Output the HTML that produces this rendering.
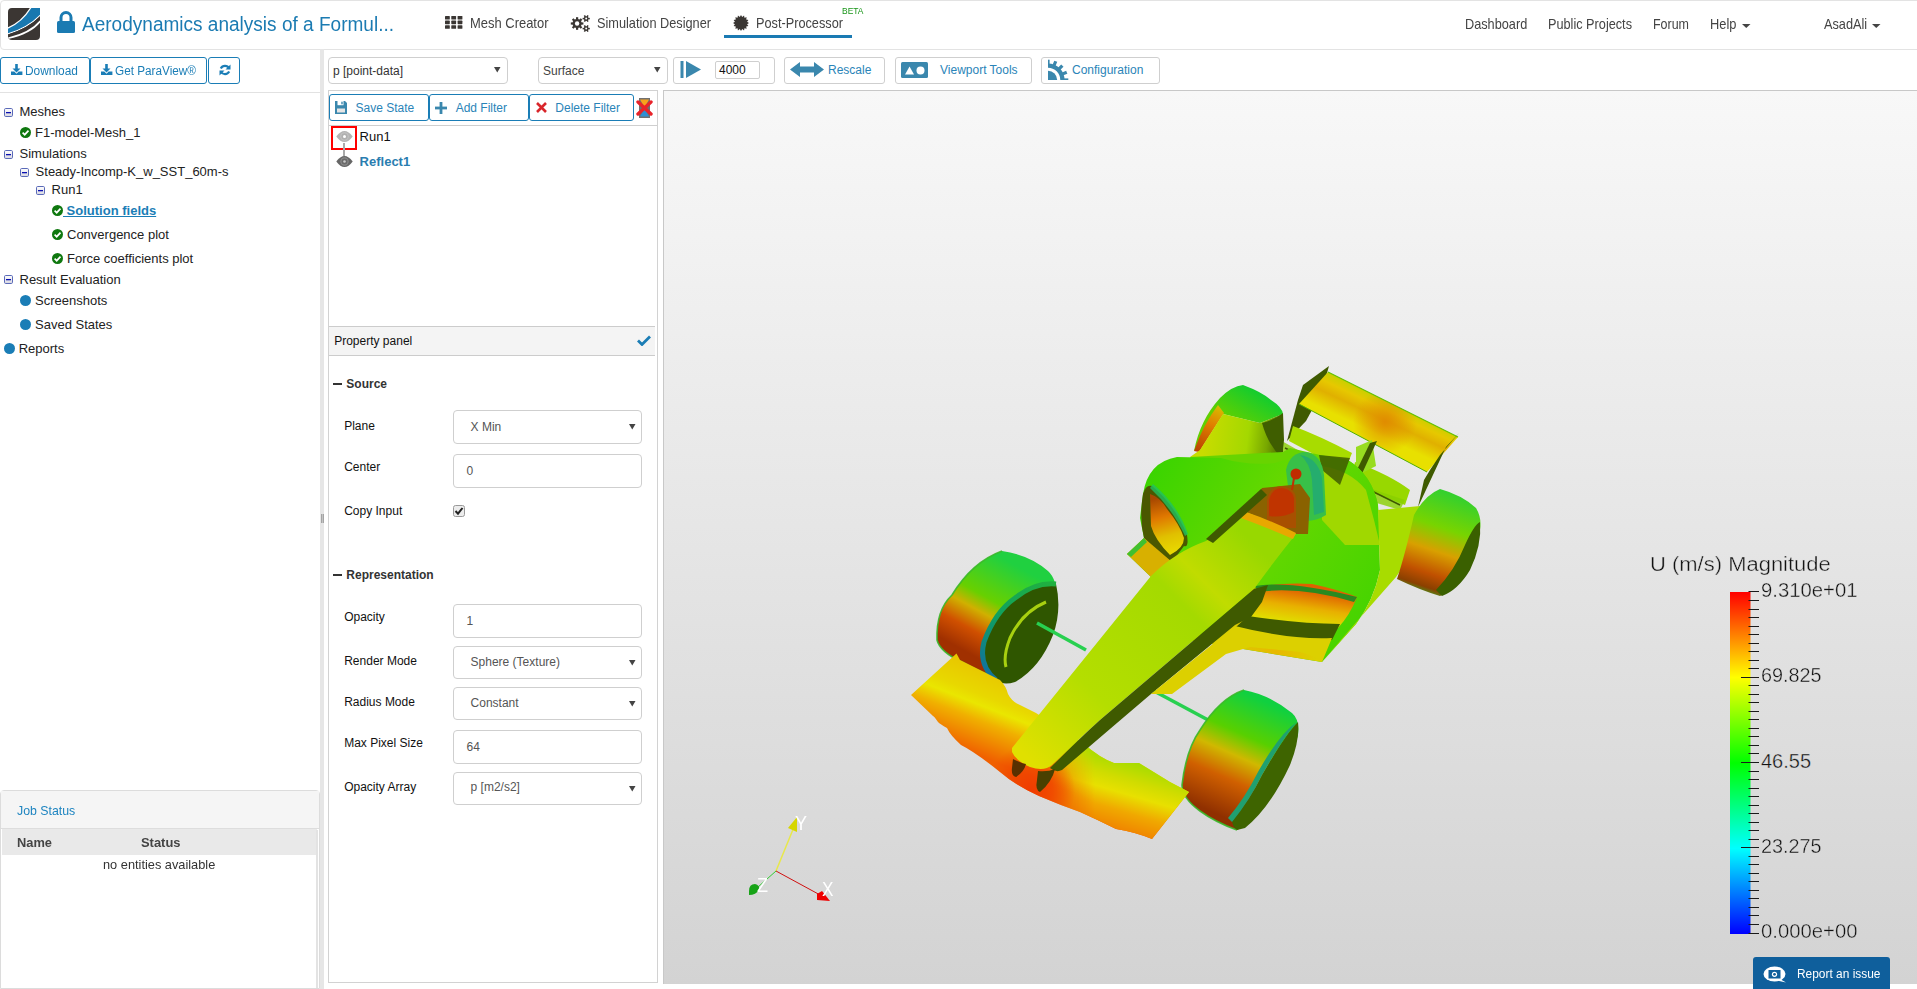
<!DOCTYPE html>
<html><head><meta charset="utf-8"><style>
html,body{margin:0;padding:0;width:1917px;height:989px;overflow:hidden;background:#fff;font-family:"Liberation Sans", sans-serif;position:relative}
</style></head><body>
<div style="position:absolute;left:0px;top:0px;width:1930px;height:50px;box-sizing:border-box;border:1px solid #e3e3e3;border-radius:4px;background:#fff"></div>
<div style="position:absolute;left:724px;top:35px;width:128px;height:3px;box-sizing:border-box;background:#1a7ab3"></div>
<div style="position:absolute;left:0px;top:57px;width:90px;height:27px;box-sizing:border-box;border:1px solid #1a7db6;border-radius:3px;background:#fff"></div>
<div style="position:absolute;left:90px;top:57px;width:117px;height:27px;box-sizing:border-box;border:1px solid #1a7db6;border-radius:3px;background:#fff"></div>
<div style="position:absolute;left:208px;top:57px;width:32px;height:27px;box-sizing:border-box;border:1px solid #1a7db6;border-radius:3px;background:#fff"></div>
<div style="position:absolute;left:0px;top:92px;width:320px;height:1px;box-sizing:border-box;background:#e2e2e2"></div>
<div style="position:absolute;left:320px;top:49px;width:4px;height:940px;box-sizing:border-box;background:#e6e6e6"></div>
<div style="position:absolute;left:0px;top:790px;width:320px;height:199px;box-sizing:border-box;border:1px solid #dcdcdc;border-radius:4px 4px 0 0;background:#fff"></div>
<div style="position:absolute;left:1px;top:791px;width:318px;height:38px;box-sizing:border-box;background:#f5f5f5;border-bottom:1px solid #ddd"></div>
<div style="position:absolute;left:2px;top:829px;width:315px;height:26px;box-sizing:border-box;background:#e9e9e9"></div>
<div style="position:absolute;left:316px;top:830px;width:2px;height:158px;box-sizing:border-box;background:#e3e3e3"></div>
<div style="position:absolute;left:328px;top:57px;width:180px;height:27px;box-sizing:border-box;border:1px solid #cfcfcf;border-radius:4px;background:#fff"></div>
<div style="position:absolute;left:538px;top:57px;width:130px;height:27px;box-sizing:border-box;border:1px solid #cfcfcf;border-radius:4px;background:#fff"></div>
<div style="position:absolute;left:673px;top:57px;width:102px;height:27px;box-sizing:border-box;border:1px solid #cfcfcf;border-radius:3px;background:#fff"></div>
<div style="position:absolute;left:715px;top:61px;width:45px;height:18px;box-sizing:border-box;border:1px solid #cfcfcf;border-radius:2px;background:#fff"></div>
<div style="position:absolute;left:784px;top:57px;width:101px;height:27px;box-sizing:border-box;border:1px solid #cfcfcf;border-radius:3px;background:#fff"></div>
<div style="position:absolute;left:895px;top:57px;width:137px;height:27px;box-sizing:border-box;border:1px solid #cfcfcf;border-radius:3px;background:#fff"></div>
<div style="position:absolute;left:1041px;top:57px;width:119px;height:27px;box-sizing:border-box;border:1px solid #cfcfcf;border-radius:3px;background:#fff"></div>
<div style="position:absolute;left:328px;top:90px;width:330px;height:893px;box-sizing:border-box;border:1px solid #d2d2d2;background:#fff"></div>
<div style="position:absolute;left:329px;top:125px;width:328px;height:1px;box-sizing:border-box;background:#cfcfcf"></div>
<div style="position:absolute;left:329px;top:94px;width:100px;height:27px;box-sizing:border-box;border:1px solid #1a7db6;border-radius:3px;background:#fff"></div>
<div style="position:absolute;left:429px;top:94px;width:100px;height:27px;box-sizing:border-box;border:1px solid #1a7db6;border-radius:3px;background:#fff"></div>
<div style="position:absolute;left:529px;top:94px;width:105px;height:27px;box-sizing:border-box;border:1px solid #1a7db6;border-radius:3px;background:#fff"></div>
<div style="position:absolute;left:331px;top:126px;width:26px;height:24px;box-sizing:border-box;border:2px solid #ff0000"></div>
<div style="position:absolute;left:343px;top:143px;width:2px;height:13px;box-sizing:border-box;background:#aaa"></div>
<div style="position:absolute;left:329px;top:326px;width:326px;height:30px;box-sizing:border-box;background:#f4f4f4;border-top:1px solid #cccccc;border-bottom:1px solid #cccccc"></div>
<div style="position:absolute;left:333px;top:382.5px;width:9px;height:2.0px;box-sizing:border-box;background:#333"></div>
<div style="position:absolute;left:453px;top:410px;width:189px;height:34px;box-sizing:border-box;border:1px solid #cfcfcf;border-radius:4px;background:#fff"></div>
<div style="position:absolute;left:453px;top:454px;width:189px;height:34px;box-sizing:border-box;border:1px solid #cfcfcf;border-radius:4px;background:#fff"></div>
<div style="position:absolute;left:333px;top:573.5px;width:9px;height:2.0px;box-sizing:border-box;background:#333"></div>
<div style="position:absolute;left:453px;top:604px;width:189px;height:34px;box-sizing:border-box;border:1px solid #cfcfcf;border-radius:4px;background:#fff"></div>
<div style="position:absolute;left:453px;top:646px;width:189px;height:33px;box-sizing:border-box;border:1px solid #cfcfcf;border-radius:4px;background:#fff"></div>
<div style="position:absolute;left:453px;top:687px;width:189px;height:33px;box-sizing:border-box;border:1px solid #cfcfcf;border-radius:4px;background:#fff"></div>
<div style="position:absolute;left:453px;top:730px;width:189px;height:34px;box-sizing:border-box;border:1px solid #cfcfcf;border-radius:4px;background:#fff"></div>
<div style="position:absolute;left:453px;top:772px;width:189px;height:33px;box-sizing:border-box;border:1px solid #cfcfcf;border-radius:4px;background:#fff"></div>
<div style="position:absolute;left:663px;top:90px;width:1254px;height:894px;box-sizing:border-box;border-left:1px solid #c8c8c8;border-top:1px solid #c8c8c8;background:linear-gradient(#f8f8f8, #d3d3d3)"></div>
<svg style="position:absolute;left:0;top:0" width="1917" height="989" viewBox="0 0 1917 989">
<defs>
<linearGradient id="rw" gradientUnits="userSpaceOnUse" x1="1330" y1="368" x2="1313" y2="404">
 <stop offset="0" stop-color="#b8d400"/><stop offset="0.35" stop-color="#e6c800"/><stop offset="0.6" stop-color="#e0b000"/><stop offset="1" stop-color="#e8e000"/></linearGradient>
<radialGradient id="rwspot" gradientUnits="userSpaceOnUse" cx="1385" cy="422" r="32"><stop offset="0" stop-color="#e08800" stop-opacity="0.9"/><stop offset="1" stop-color="#e08800" stop-opacity="0"/></radialGradient>
<linearGradient id="tireFL" gradientUnits="userSpaceOnUse" x1="1015" y1="565" x2="962" y2="662">
 <stop offset="0" stop-color="#20d040"/><stop offset="0.38" stop-color="#68d000"/><stop offset="0.52" stop-color="#d0b000"/><stop offset="0.7" stop-color="#d05000"/><stop offset="0.9" stop-color="#a03000"/></linearGradient>
<linearGradient id="tireFR" gradientUnits="userSpaceOnUse" x1="1262" y1="700" x2="1212" y2="812">
 <stop offset="0" stop-color="#10d040"/><stop offset="0.32" stop-color="#58d000"/><stop offset="0.5" stop-color="#d0b800"/><stop offset="0.7" stop-color="#d06000"/><stop offset="1" stop-color="#903000"/></linearGradient>
<linearGradient id="tireRR" gradientUnits="userSpaceOnUse" x1="1452" y1="492" x2="1418" y2="592">
 <stop offset="0" stop-color="#30d030"/><stop offset="0.35" stop-color="#78d400"/><stop offset="0.58" stop-color="#d8a000"/><stop offset="0.8" stop-color="#c05000"/><stop offset="0.93" stop-color="#8a4000"/><stop offset="1" stop-color="#40a020"/></linearGradient>
<linearGradient id="tireRL" gradientUnits="userSpaceOnUse" x1="1250" y1="385" x2="1230" y2="420">
 <stop offset="0" stop-color="#10cc30"/><stop offset="1" stop-color="#60d000"/></linearGradient>
<linearGradient id="fw" gradientUnits="userSpaceOnUse" x1="990" y1="672" x2="960" y2="748">
 <stop offset="0" stop-color="#e8c800"/><stop offset="0.3" stop-color="#e8d800"/><stop offset="0.42" stop-color="#eae600"/><stop offset="0.6" stop-color="#f0b000"/><stop offset="1" stop-color="#f06000"/></linearGradient>
<linearGradient id="fw2" gradientUnits="userSpaceOnUse" x1="1130" y1="762" x2="1110" y2="830">
 <stop offset="0" stop-color="#a8dc00"/><stop offset="0.25" stop-color="#d0dc00"/><stop offset="0.45" stop-color="#e8e000"/><stop offset="0.7" stop-color="#f0a800"/><stop offset="1" stop-color="#f08000"/></linearGradient>
<radialGradient id="fwred" gradientUnits="userSpaceOnUse" cx="1030" cy="790" r="45"><stop offset="0" stop-color="#f03c00"/><stop offset="0.5" stop-color="#f04000" stop-opacity="0.7"/><stop offset="1" stop-color="#f04000" stop-opacity="0"/></radialGradient>
<linearGradient id="nose" gradientUnits="userSpaceOnUse" x1="1030" y1="760" x2="1250" y2="540">
 <stop offset="0" stop-color="#e0e000"/><stop offset="0.3" stop-color="#b4de00"/><stop offset="0.7" stop-color="#a4da00"/><stop offset="0.8" stop-color="#c0dc00"/><stop offset="1" stop-color="#98d800"/></linearGradient>
<linearGradient id="pod" gradientUnits="userSpaceOnUse" x1="1150" y1="460" x2="1370" y2="600">
 <stop offset="0" stop-color="#38d400"/><stop offset="0.5" stop-color="#68d800"/><stop offset="1" stop-color="#48d400"/></linearGradient>
<linearGradient id="inletR" gradientUnits="userSpaceOnUse" x1="1290" y1="588" x2="1285" y2="622">
 <stop offset="0" stop-color="#e06000"/><stop offset="0.5" stop-color="#e8b000"/><stop offset="1" stop-color="#e0e000"/></linearGradient>
<linearGradient id="inletL" gradientUnits="userSpaceOnUse" x1="1158" y1="498" x2="1172" y2="552">
 <stop offset="0" stop-color="#a84800"/><stop offset="0.35" stop-color="#e07800"/><stop offset="0.7" stop-color="#e0c000"/><stop offset="1" stop-color="#e8d800"/></linearGradient>
<linearGradient id="floorR" gradientUnits="userSpaceOnUse" x1="1200" y1="630" x2="1330" y2="650">
 <stop offset="0" stop-color="#d0d800"/><stop offset="0.6" stop-color="#e8b800"/><stop offset="1" stop-color="#d8d800"/></linearGradient>
<linearGradient id="rlsurf" gradientUnits="userSpaceOnUse" x1="1205" y1="430" x2="1283" y2="440">
 <stop offset="0" stop-color="#c8dc00"/><stop offset="0.55" stop-color="#a4d800"/><stop offset="0.8" stop-color="#78a800"/><stop offset="1" stop-color="#4a6800"/></linearGradient>
<linearGradient id="rlor" gradientUnits="userSpaceOnUse" x1="1220" y1="405" x2="1197" y2="452">
 <stop offset="0" stop-color="#d8c000"/><stop offset="0.4" stop-color="#e08000"/><stop offset="1" stop-color="#b84000"/></linearGradient>
<linearGradient id="wmg" gradientUnits="userSpaceOnUse" x1="1045" y1="0" x2="1095" y2="0"><stop offset="0" stop-color="#000"/><stop offset="1" stop-color="#fff"/></linearGradient>
<mask id="wmask" maskUnits="userSpaceOnUse" x="900" y="640" width="300" height="210"><rect x="900" y="640" width="300" height="210" fill="url(#wmg)"/></mask>
<path id="wingP" d="M911 695 L956.5 653.5 L960 660 L1000 680 Q1006 686 1008 694 Q1012 702 1020 705 L1036 713 L1084 744 Q1100 758 1114 763 L1139 763 L1170 782 L1189 792 L1152 839 Q1135 832 1116 829 Q1098 820 1080 812 Q1060 805 1039 796 Q1015 785 1000 772 Q975 752 961 745 Q950 735 947 728 Q940 724 938 722 Q934 716 933 716 Z"/>
<linearGradient id="rimFL" gradientUnits="userSpaceOnUse" x1="1050" y1="584" x2="990" y2="678"><stop offset="0" stop-color="#20b040"/><stop offset="0.5" stop-color="#10a060"/><stop offset="1" stop-color="#1070a0"/></linearGradient>
</defs>

<!-- rear wing -->
<polygon points="1329,366 1303,385 1298,400 1287,441 1306,421 1312,410 1327,373" fill="#3f5a00"/>
<polygon points="1328,372 1458,437 1427,472 1299,404" fill="url(#rw)"/>
<polygon points="1328,372 1458,437 1427,472 1299,404" fill="url(#rwspot)"/>
<polyline points="1328,372 1458,437" stroke="#60c000" stroke-width="1.2" fill="none"/>
<polyline points="1299,404 1427,472" stroke="#50b000" stroke-width="1" fill="none"/>
<polygon points="1459,433 1446,447 1418,507 1424,480 1430,470 1440,455" fill="#3f5a00"/>
<!-- beam wing / rear bits -->
<path d="M1293 426 Q1320 436 1352 453 L1345 470 Q1315 455 1289 441Z" fill="#a8dc00"/>
<path d="M1355 462 Q1390 475 1410 490 L1405 505 Q1380 495 1350 485Z" fill="#98d800"/>
<path d="M1280 440 L1360 485 L1405 500 L1400 510 L1350 495 L1275 455Z" fill="#88d000" opacity="0.8"/>
<line x1="1285" y1="448" x2="1400" y2="505" stroke="#3f5a00" stroke-width="1.5"/>
<polygon points="1356,447 1372,440 1376,466 1356,476" fill="#98dc20"/>
<polygon points="1370,443 1377,441 1360,478 1353,478" fill="#3f5a00"/>
<!-- rear-left wheel -->
<path d="M1194 451 Q1200 420 1220 398 Q1232 386 1243 385 Q1262 392 1271 400 Q1282 407 1283 414 L1260 423 L1223 414 Z" fill="url(#tireRL)"/>
<path d="M1194 451 Q1203 425 1218 405 L1224 413 L1199 452Z" fill="url(#rlor)"/>
<path d="M1223 414 L1260 423 L1283 414 L1283 459 L1190 457 L1200 450Z" fill="url(#rlsurf)"/>
<path d="M1262 423 Q1275 420 1283 413 L1284 440 L1282 458 Q1268 445 1262 423Z" fill="#3f5e00"/>
<!-- body base -->
<path d="M1190 457 L1283 452 L1290 448 L1320 455 L1348 460 Q1372 475 1378 505 L1380 540 L1240 560Z" fill="#68d400"/>
<path d="M1143 494 Q1148 462 1177 457 L1221 458 Q1248 466 1275 463 L1294 457 L1320 455 L1348 460 Q1372 475 1378 505 L1380 570 Q1374 600 1356 624 L1322 662 L1188 640 L1151 577 L1127 554 L1144 538 L1140 518 Z" fill="url(#pod)"/>
<!-- engine cover right -->
<path d="M1321 466 Q1350 470 1366 490 L1374 520 L1380 545 L1345 545 L1322 520Z" fill="#a0d800"/>
<path d="M1319 455 L1350 458 L1340 485 L1322 470Z" fill="#3f5a00" opacity="0.85"/>
<!-- right floor -->
<path d="M1378 510 L1420 506 L1433 522 L1396 577 L1352 627 L1322 662 L1356 624 Q1374 600 1380 570Z" fill="#a8dc00"/>
<path d="M1188 640 L1240 618 L1300 632 L1322 662Z" fill="url(#floorR)"/>
<!-- right inlet -->
<path d="M1250 590 Q1272 582 1312 584 Q1340 590 1357 597 Q1350 615 1338 628 Q1290 626 1248 617Z" fill="url(#inletR)"/>
<path d="M1255 586 Q1290 580 1357 597 L1354 602 Q1300 586 1258 592Z" fill="#2a8a20"/>
<path d="M1248 616 Q1300 624 1340 624 L1332 640 Q1290 641 1236 627Z" fill="#3f5a00"/>
<!-- left inlet -->
<path d="M1143 494 Q1146 484 1152 486 Q1175 505 1187 535 Q1189 548 1184 546 L1172 562 Q1152 548 1144 538 Q1139 518 1143 494Z" fill="#4a5800"/>
<path d="M1150 494 Q1160 497 1167 509 Q1180 525 1184 538 Q1184 548 1170 555 Q1155 540 1151 526 Z" fill="url(#inletL)"/>
<path d="M1153 484 Q1178 505 1188 534 L1185 536 Q1172 508 1150 488Z" fill="#20c060" opacity="0.8"/>
<path d="M1127 554 L1144 538 L1172 562 L1151 577Z" fill="#d8b000"/><path d="M1127 554 L1144 538 L1147 542 L1131 557Z" fill="#40c030"/>
<!-- cockpit area -->
<path d="M1286 470 Q1290 452 1306 452 Q1322 455 1324 475 L1326 515 Q1310 525 1292 518 Z" fill="#38c048"/>
<path d="M1300 455 Q1318 458 1322 478 L1324 512 L1314 515 L1312 480 Q1310 462 1300 455Z" fill="#20a878" opacity="0.8"/>
<path d="M1246 512 L1262 488 L1300 484 L1310 498 L1308 534 L1296 534 Q1270 522 1246 512 Z" fill="#8a6200"/>
<path d="M1267 528 L1267 500 Q1270 486 1282 486 Q1296 488 1296 500 L1296 528 Z" fill="#a85000"/>
<path d="M1269 516 L1269 500 Q1272 488 1282 488 Q1294 490 1294 500 L1294 512 Q1282 518 1269 516Z" fill="#c03400"/>
<line x1="1294" y1="478" x2="1292" y2="490" stroke="#c03000" stroke-width="2"/>
<circle cx="1296" cy="474" r="5.5" fill="#c02c00"/>
<!-- front-left wheel -->
<path d="M1002 551 Q1030 555 1048 571 Q1058 580 1057 604 Q1052 640 1030 668 Q1015 682 1004 681 Q980 672 962 662 Q940 652 937 640 Q936 610 952 595 Q972 562 1002 551Z" fill="url(#tireFL)"/>
<path d="M1004 681 Q980 672 962 662 Q940 652 937 640 Q936 610 952 595 Q972 562 1002 551" fill="none" stroke="#38b828" stroke-width="1.6" opacity="0.9"/>
<path d="M1056 584 Q1062 610 1053 635 Q1040 668 1015 682 Q1003 686 996 680 Q978 665 984 642 Q995 612 1015 598 Q1035 582 1056 584 Z" fill="#2f5600"/>
<path d="M1056 584 Q1035 582 1015 598 Q995 612 984 642 Q978 665 996 680" fill="none" stroke="url(#rimFL)" stroke-width="5"/>
<path d="M1046 602 Q1022 612 1010 638 Q1003 656 1006 667" fill="none" stroke="#a8d010" stroke-width="3"/>
<!-- axles -->
<line x1="1037" y1="623" x2="1086" y2="650" stroke="#28d050" stroke-width="3.5"/>
<line x1="1154" y1="691" x2="1210" y2="721" stroke="#28d050" stroke-width="3.5"/>
<!-- front-right wheel -->
<path d="M1244 690 Q1270 695 1292 713 Q1300 720 1298 735 Q1290 770 1270 795 Q1250 825 1237 830 Q1215 822 1200 811 Q1182 798 1182 785 Q1186 750 1200 730 Q1220 698 1244 690Z" fill="url(#tireFR)"/>
<path d="M1237 830 Q1215 822 1200 811 Q1182 798 1182 785 Q1186 750 1200 730 Q1220 698 1244 690" fill="none" stroke="#38b828" stroke-width="1.6" opacity="0.9"/>
<path d="M1298 722 Q1300 740 1290 765 Q1270 808 1245 828 L1237 830 Q1232 826 1232 820 Q1250 800 1262 775 Q1285 735 1298 722Z" fill="#3e6400"/>
<path d="M1297 722 Q1285 735 1262 775 Q1250 800 1232 822 L1228 818 Q1245 798 1258 772 Q1280 733 1297 722Z" fill="#20a070"/>
<!-- front wing -->
<use href="#wingP" fill="url(#fw)"/>
<use href="#wingP" fill="url(#fw2)" mask="url(#wmask)"/>
<use href="#wingP" fill="url(#fwred)"/>
<!-- nose -->
<path d="M1012 748 L1151 576 Q1175 552 1206 541 L1246 512 Q1270 522 1296 534 Q1275 560 1254 589 L1100 720 Q1065 752 1052 765 Q1044 772 1030 767 Q1016 761 1012 752 Z" fill="url(#nose)"/>
<path d="M1246 512 Q1270 520 1296 533 L1293 539 Q1268 528 1241 518 Z" fill="#e8a800"/>
<path d="M1206 539 L1261 489 L1267 495 L1213 543Z" fill="#3f5a00"/>
<path d="M1100 720 L1254 589 L1268 585 L1262 602 L1251 617 L1235 625 L1151 694 L1120.5 720 L1062 770 Q1056 773 1050 768 Q1080 738 1100 720 Z" fill="#3f5a00"/>
<path d="M1151 694 L1235 626 Q1290 640 1332 638 L1322 662 Q1310 654 1300 652 L1250 647 L1226 654 L1172 694 Z" fill="#dcd000"/>
<path d="M1013 759 Q1020 763 1026 764 Q1024 772 1016 777 Q1011 776 1012 768 Z" fill="#5a3000"/>
<path d="M1038 771 Q1048 772 1055 769 Q1052 782 1040 792 Q1035 790 1037 780 Z" fill="#4a4000"/>
<!-- rear-right wheel -->
<path d="M1440 489 Q1462 495 1476 508 Q1482 518 1480 530 Q1474 560 1458 580 Q1448 594 1440 596 Q1420 590 1397 579 Q1405 555 1414 515 Q1425 495 1440 489Z" fill="url(#tireRR)"/>
<path d="M1480 522 Q1482 545 1470 570 Q1458 590 1442 596 L1436 590 Q1455 570 1465 545 Q1474 525 1480 522Z" fill="#3a6000"/>
</svg>
<svg style="position:absolute;left:720px;top:800px" width="140" height="120" viewBox="720 800 140 120">
<line x1="776" y1="871" x2="794" y2="827" stroke="#e8e84a" stroke-width="1.5"/>
<polygon points="788,828 797,817 797,832" fill="#d6d600"/>
<line x1="776" y1="871" x2="758" y2="887" stroke="#3c3" stroke-width="1"/>
<path d="M749 891 Q749 884 755 884 Q760 885 759 890 Q756 895 749 895Z" fill="#17a317"/>
<line x1="776" y1="871" x2="822" y2="896" stroke="#d01010" stroke-width="1"/>
<polygon points="817,894 822,891 830,901 817,900" fill="#e00"/>
</svg>
<svg style="position:absolute;left:1640px;top:540px" width="260" height="410" viewBox="1640 540 260 410">
<defs><linearGradient id="cbg" x1="0" y1="1" x2="0" y2="0">
<stop offset="0" stop-color="#0000ff"/><stop offset="0.25" stop-color="#00ffff"/><stop offset="0.5" stop-color="#00ff00"/><stop offset="0.75" stop-color="#ffff00"/><stop offset="1" stop-color="#ff0000"/></linearGradient></defs>
<rect x="1730" y="592" width="20.5" height="342" fill="url(#cbg)"/>
<rect x="1748.5" y="591" width="10.5" height="1" fill="#1a1a1a"/>
<rect x="1748.5" y="600" width="10.5" height="1" fill="#1a1a1a"/>
<rect x="1748.5" y="609" width="10.5" height="1" fill="#1a1a1a"/>
<rect x="1748.5" y="617" width="10.5" height="1" fill="#1a1a1a"/>
<rect x="1748.5" y="626" width="10.5" height="1" fill="#1a1a1a"/>
<rect x="1748.5" y="634" width="10.5" height="1" fill="#1a1a1a"/>
<rect x="1748.5" y="643" width="10.5" height="1" fill="#1a1a1a"/>
<rect x="1748.5" y="651" width="10.5" height="1" fill="#1a1a1a"/>
<rect x="1748.5" y="660" width="10.5" height="1" fill="#1a1a1a"/>
<rect x="1748.5" y="668" width="10.5" height="1" fill="#1a1a1a"/>
<rect x="1741" y="677" width="18" height="1" fill="#1a1a1a"/>
<rect x="1748.5" y="685" width="10.5" height="1" fill="#1a1a1a"/>
<rect x="1748.5" y="694" width="10.5" height="1" fill="#1a1a1a"/>
<rect x="1748.5" y="702" width="10.5" height="1" fill="#1a1a1a"/>
<rect x="1748.5" y="711" width="10.5" height="1" fill="#1a1a1a"/>
<rect x="1748.5" y="719" width="10.5" height="1" fill="#1a1a1a"/>
<rect x="1748.5" y="728" width="10.5" height="1" fill="#1a1a1a"/>
<rect x="1748.5" y="736" width="10.5" height="1" fill="#1a1a1a"/>
<rect x="1748.5" y="745" width="10.5" height="1" fill="#1a1a1a"/>
<rect x="1748.5" y="753" width="10.5" height="1" fill="#1a1a1a"/>
<rect x="1741" y="762" width="18" height="1" fill="#1a1a1a"/>
<rect x="1748.5" y="771" width="10.5" height="1" fill="#1a1a1a"/>
<rect x="1748.5" y="779" width="10.5" height="1" fill="#1a1a1a"/>
<rect x="1748.5" y="788" width="10.5" height="1" fill="#1a1a1a"/>
<rect x="1748.5" y="796" width="10.5" height="1" fill="#1a1a1a"/>
<rect x="1748.5" y="805" width="10.5" height="1" fill="#1a1a1a"/>
<rect x="1748.5" y="813" width="10.5" height="1" fill="#1a1a1a"/>
<rect x="1748.5" y="822" width="10.5" height="1" fill="#1a1a1a"/>
<rect x="1748.5" y="830" width="10.5" height="1" fill="#1a1a1a"/>
<rect x="1748.5" y="839" width="10.5" height="1" fill="#1a1a1a"/>
<rect x="1741" y="847" width="18" height="1" fill="#1a1a1a"/>
<rect x="1748.5" y="856" width="10.5" height="1" fill="#1a1a1a"/>
<rect x="1748.5" y="864" width="10.5" height="1" fill="#1a1a1a"/>
<rect x="1748.5" y="873" width="10.5" height="1" fill="#1a1a1a"/>
<rect x="1748.5" y="881" width="10.5" height="1" fill="#1a1a1a"/>
<rect x="1748.5" y="890" width="10.5" height="1" fill="#1a1a1a"/>
<rect x="1748.5" y="898" width="10.5" height="1" fill="#1a1a1a"/>
<rect x="1748.5" y="907" width="10.5" height="1" fill="#1a1a1a"/>
<rect x="1748.5" y="915" width="10.5" height="1" fill="#1a1a1a"/>
<rect x="1748.5" y="924" width="10.5" height="1" fill="#1a1a1a"/>
<rect x="1748.5" y="933" width="10.5" height="1" fill="#1a1a1a"/>
</svg>
<div style="position:absolute;left:1753px;top:957px;width:137px;height:40px;background:#0f5f9c;border-radius:3px"></div>
<svg style="position:absolute;left:1763px;top:966px" width="24" height="17" viewBox="0 0 24 17"><ellipse cx="11.5" cy="8" rx="11" ry="7.5" fill="#fff"/><polygon points="17,13 23,16.5 14,14.5" fill="#fff"/><rect x="5.5" y="4" width="12" height="8.5" fill="#0f5f9c"/><circle cx="11.5" cy="8.3" r="2.6" fill="#fff"/><circle cx="11.5" cy="8.3" r="1.4" fill="#0f5f9c"/></svg>
<svg style="position:absolute;left:8px;top:8px" width="32" height="32" viewBox="0 0 32 32">
<defs><clipPath id="lc"><path d="M2 0H32V28Q32 32 28 32H4Q0 32 0 28V4Q0 0 4 0Z"/></clipPath></defs>
<g clip-path="url(#lc)">
<rect width="32" height="32" fill="#3b3633"/>
<path d="M23 -2 Q14 14 -2 20 L-2 27 Q22 20 34 6 L34 -2Z" fill="#fff"/>
<path d="M24.5 -2 Q15 15 -2 21.5 L-2 26 Q21 19 34 4.5 L34 -2Z" fill="#1878b0"/>
<path d="M-2 27 Q22 20 34 6 L34 9 Q24 23 -2 29.5Z" fill="#3b3633"/>
<path d="M34 9.5 Q24 24 -2 30 L-2 31.5 Q25 26 34 12Z" fill="#fff"/>
<path d="M34 -2 L26 -2 Q25 1 24 2 Z" fill="#1878b0"/>
</g></svg>
<svg style="position:absolute;left:57px;top:11px" width="18" height="22" viewBox="0 0 18 22"><path d="M4 10V6.5A5 5 0 0 1 14 6.5V10" fill="none" stroke="#1b7bb2" stroke-width="3"/><rect x="0" y="10" width="18" height="12" rx="1.5" fill="#1b7bb2"/></svg>
<svg style="position:absolute;left:445px;top:16px" width="18" height="14" viewBox="0 0 18 14"><rect x="0.0" y="0.0" width="4.8" height="3.6" rx="0.6" fill="#3a3633"/><rect x="6.3" y="0.0" width="4.8" height="3.6" rx="0.6" fill="#3a3633"/><rect x="12.6" y="0.0" width="4.8" height="3.6" rx="0.6" fill="#3a3633"/><rect x="0.0" y="4.6" width="4.8" height="3.6" rx="0.6" fill="#3a3633"/><rect x="6.3" y="4.6" width="4.8" height="3.6" rx="0.6" fill="#3a3633"/><rect x="12.6" y="4.6" width="4.8" height="3.6" rx="0.6" fill="#3a3633"/><rect x="0.0" y="9.2" width="4.8" height="3.6" rx="0.6" fill="#3a3633"/><rect x="6.3" y="9.2" width="4.8" height="3.6" rx="0.6" fill="#3a3633"/><rect x="12.6" y="9.2" width="4.8" height="3.6" rx="0.6" fill="#3a3633"/></svg>
<svg style="position:absolute;left:569px;top:12px" width="22" height="22" viewBox="0 0 22 22"><g fill="#3a3633"><circle cx="8.1" cy="11.5" r="4.6"/><rect x="-1.1" y="-6.3" width="2.2" height="2.5" transform="translate(8.1 11.5) rotate(0.0)"/><rect x="-1.1" y="-6.3" width="2.2" height="2.5" transform="translate(8.1 11.5) rotate(45.0)"/><rect x="-1.1" y="-6.3" width="2.2" height="2.5" transform="translate(8.1 11.5) rotate(90.0)"/><rect x="-1.1" y="-6.3" width="2.2" height="2.5" transform="translate(8.1 11.5) rotate(135.0)"/><rect x="-1.1" y="-6.3" width="2.2" height="2.5" transform="translate(8.1 11.5) rotate(180.0)"/><rect x="-1.1" y="-6.3" width="2.2" height="2.5" transform="translate(8.1 11.5) rotate(225.0)"/><rect x="-1.1" y="-6.3" width="2.2" height="2.5" transform="translate(8.1 11.5) rotate(270.0)"/><rect x="-1.1" y="-6.3" width="2.2" height="2.5" transform="translate(8.1 11.5) rotate(315.0)"/></g><circle cx="8.1" cy="11.5" r="2.2" fill="#fff"/><g fill="#3a3633"><circle cx="17.2" cy="6.6" r="2.4"/><rect x="-0.75" y="-3.6" width="1.5" height="2.0" transform="translate(17.2 6.6) rotate(30.0)"/><rect x="-0.75" y="-3.6" width="1.5" height="2.0" transform="translate(17.2 6.6) rotate(90.0)"/><rect x="-0.75" y="-3.6" width="1.5" height="2.0" transform="translate(17.2 6.6) rotate(150.0)"/><rect x="-0.75" y="-3.6" width="1.5" height="2.0" transform="translate(17.2 6.6) rotate(210.0)"/><rect x="-0.75" y="-3.6" width="1.5" height="2.0" transform="translate(17.2 6.6) rotate(270.0)"/><rect x="-0.75" y="-3.6" width="1.5" height="2.0" transform="translate(17.2 6.6) rotate(330.0)"/></g><circle cx="17.2" cy="6.6" r="1.0" fill="#fff"/><g fill="#3a3633"><circle cx="17.2" cy="16.6" r="2.4"/><rect x="-0.75" y="-3.6" width="1.5" height="2.0" transform="translate(17.2 16.6) rotate(30.0)"/><rect x="-0.75" y="-3.6" width="1.5" height="2.0" transform="translate(17.2 16.6) rotate(90.0)"/><rect x="-0.75" y="-3.6" width="1.5" height="2.0" transform="translate(17.2 16.6) rotate(150.0)"/><rect x="-0.75" y="-3.6" width="1.5" height="2.0" transform="translate(17.2 16.6) rotate(210.0)"/><rect x="-0.75" y="-3.6" width="1.5" height="2.0" transform="translate(17.2 16.6) rotate(270.0)"/><rect x="-0.75" y="-3.6" width="1.5" height="2.0" transform="translate(17.2 16.6) rotate(330.0)"/></g><circle cx="17.2" cy="16.6" r="1.0" fill="#fff"/></svg>
<svg style="position:absolute;left:733px;top:15px" width="16" height="16" viewBox="0 0 16 16"><polygon points="16.00,8.00 14.08,9.21 15.39,11.06 13.16,11.44 13.66,13.66 11.44,13.16 11.06,15.39 9.21,14.08 8.00,16.00 6.79,14.08 4.94,15.39 4.56,13.16 2.34,13.66 2.84,11.44 0.61,11.06 1.92,9.21 0.00,8.00 1.92,6.79 0.61,4.94 2.84,4.56 2.34,2.34 4.56,2.84 4.94,0.61 6.79,1.92 8.00,0.00 9.21,1.92 11.06,0.61 11.44,2.84 13.66,2.34 13.16,4.56 15.39,4.94 14.08,6.79" fill="#3a3633"/></svg>
<svg style="position:absolute;left:1741.5px;top:23.5px" width="9" height="5" viewBox="0 0 9 5"><polygon points="0,0 8.5,0 4.25,4" fill="#444"/></svg>
<svg style="position:absolute;left:1871.5px;top:23.5px" width="9" height="5" viewBox="0 0 9 5"><polygon points="0,0 8.5,0 4.25,4" fill="#444"/></svg>
<svg style="position:absolute;left:11px;top:64px" width="12" height="11" viewBox="0 0 12 11"><path d="M4.2 0H6.8V4.5H9.5L5.5 8.5L1.5 4.5H4.2Z" fill="#1a7db6"/><path d="M0 7.5H3.3L5.5 9.7L7.7 7.5H11.4V11H0Z" fill="#1a7db6"/></svg>
<svg style="position:absolute;left:101px;top:64px" width="12" height="11" viewBox="0 0 12 11"><path d="M4.2 0H6.8V4.5H9.5L5.5 8.5L1.5 4.5H4.2Z" fill="#1a7db6"/><path d="M0 7.5H3.3L5.5 9.7L7.7 7.5H11.4V11H0Z" fill="#1a7db6"/></svg>
<svg style="position:absolute;left:218.5px;top:64px" width="12" height="12" viewBox="0 0 12 12"><path d="M10.2 4.2A4.8 4.8 0 0 0 1.8 4.4" fill="none" stroke="#1a7db6" stroke-width="2.2"/><polygon points="11.5,0.5 11.5,5.5 6.5,5.5" fill="#1a7db6"/><path d="M1.8 7.8A4.8 4.8 0 0 0 10.2 7.6" fill="none" stroke="#1a7db6" stroke-width="2.2"/><polygon points="0.5,11.5 0.5,6.5 5.5,6.5" fill="#1a7db6"/></svg>
<svg style="position:absolute;left:4px;top:108px" width="9" height="9" viewBox="0 0 9 9"><defs><linearGradient id="mg" x1="0" y1="0" x2="0" y2="1"><stop offset="0" stop-color="#fff"/><stop offset="1" stop-color="#d8d8e0"/></linearGradient></defs><rect x="0.5" y="0.5" width="8" height="8" rx="1.2" fill="url(#mg)" stroke="#5a6ab8"/><rect x="2" y="4" width="5" height="1.3" fill="#0a10b0"/></svg>
<svg style="position:absolute;left:20px;top:127px" width="11" height="11" viewBox="0 0 11 11"><circle cx="5.5" cy="5.5" r="5.5" fill="#0f780f"/><path d="M2.6 5.7L4.7 7.7L8.5 3.6" fill="none" stroke="#fff" stroke-width="1.7"/></svg>
<svg style="position:absolute;left:4px;top:150px" width="9" height="9" viewBox="0 0 9 9"><defs><linearGradient id="mg" x1="0" y1="0" x2="0" y2="1"><stop offset="0" stop-color="#fff"/><stop offset="1" stop-color="#d8d8e0"/></linearGradient></defs><rect x="0.5" y="0.5" width="8" height="8" rx="1.2" fill="url(#mg)" stroke="#5a6ab8"/><rect x="2" y="4" width="5" height="1.3" fill="#0a10b0"/></svg>
<svg style="position:absolute;left:20px;top:168px" width="9" height="9" viewBox="0 0 9 9"><defs><linearGradient id="mg" x1="0" y1="0" x2="0" y2="1"><stop offset="0" stop-color="#fff"/><stop offset="1" stop-color="#d8d8e0"/></linearGradient></defs><rect x="0.5" y="0.5" width="8" height="8" rx="1.2" fill="url(#mg)" stroke="#5a6ab8"/><rect x="2" y="4" width="5" height="1.3" fill="#0a10b0"/></svg>
<svg style="position:absolute;left:36px;top:186px" width="9" height="9" viewBox="0 0 9 9"><defs><linearGradient id="mg" x1="0" y1="0" x2="0" y2="1"><stop offset="0" stop-color="#fff"/><stop offset="1" stop-color="#d8d8e0"/></linearGradient></defs><rect x="0.5" y="0.5" width="8" height="8" rx="1.2" fill="url(#mg)" stroke="#5a6ab8"/><rect x="2" y="4" width="5" height="1.3" fill="#0a10b0"/></svg>
<svg style="position:absolute;left:52px;top:205px" width="11" height="11" viewBox="0 0 11 11"><circle cx="5.5" cy="5.5" r="5.5" fill="#0f780f"/><path d="M2.6 5.7L4.7 7.7L8.5 3.6" fill="none" stroke="#fff" stroke-width="1.7"/></svg>
<svg style="position:absolute;left:52px;top:229px" width="11" height="11" viewBox="0 0 11 11"><circle cx="5.5" cy="5.5" r="5.5" fill="#0f780f"/><path d="M2.6 5.7L4.7 7.7L8.5 3.6" fill="none" stroke="#fff" stroke-width="1.7"/></svg>
<svg style="position:absolute;left:52px;top:253px" width="11" height="11" viewBox="0 0 11 11"><circle cx="5.5" cy="5.5" r="5.5" fill="#0f780f"/><path d="M2.6 5.7L4.7 7.7L8.5 3.6" fill="none" stroke="#fff" stroke-width="1.7"/></svg>
<svg style="position:absolute;left:4px;top:275px" width="9" height="9" viewBox="0 0 9 9"><defs><linearGradient id="mg" x1="0" y1="0" x2="0" y2="1"><stop offset="0" stop-color="#fff"/><stop offset="1" stop-color="#d8d8e0"/></linearGradient></defs><rect x="0.5" y="0.5" width="8" height="8" rx="1.2" fill="url(#mg)" stroke="#5a6ab8"/><rect x="2" y="4" width="5" height="1.3" fill="#0a10b0"/></svg>
<svg style="position:absolute;left:20px;top:295px" width="11" height="11" viewBox="0 0 11 11"><circle cx="5.5" cy="5.5" r="5.5" fill="#1a7db6"/></svg>
<svg style="position:absolute;left:20px;top:319px" width="11" height="11" viewBox="0 0 11 11"><circle cx="5.5" cy="5.5" r="5.5" fill="#1a7db6"/></svg>
<svg style="position:absolute;left:4px;top:343px" width="11" height="11" viewBox="0 0 11 11"><circle cx="5.5" cy="5.5" r="5.5" fill="#1a7db6"/></svg>
<svg style="position:absolute;left:320.5px;top:514px" width="3" height="9" viewBox="0 0 3 9"><rect x="0.3" y="0" width="0.9" height="9" fill="#888"/><rect x="1.8" y="0" width="0.9" height="9" fill="#888"/></svg>
<svg style="position:absolute;left:494px;top:67px" width="7" height="6" viewBox="0 0 7 6"><polygon points="0,0 6.5,0 3.25,5.5" fill="#444"/></svg>
<svg style="position:absolute;left:654px;top:67px" width="7" height="6" viewBox="0 0 7 6"><polygon points="0,0 6.5,0 3.25,5.5" fill="#444"/></svg>
<svg style="position:absolute;left:680px;top:61px" width="22" height="17" viewBox="0 0 22 17"><rect x="0.5" y="0" width="3" height="17" fill="#3a87ad"/><polygon points="6,0 21,8.5 6,17" fill="#3a87ad"/></svg>
<svg style="position:absolute;left:790px;top:62px" width="34" height="15" viewBox="0 0 34 15"><polygon points="0,7.5 10,0 10,4.5 24,4.5 24,0 34,7.5 24,15 24,10.5 10,10.5 10,15" fill="#3a87ad"/></svg>
<svg style="position:absolute;left:901px;top:62px" width="27" height="16" viewBox="0 0 27 16"><rect width="27" height="16" rx="1.5" fill="#3a87ad"/><polygon points="4,12.5 8.5,4.5 13,12.5" fill="#fff"/><circle cx="19.5" cy="8.5" r="4" fill="#fff"/></svg>
<svg style="position:absolute;left:1048px;top:59px" width="21" height="22" viewBox="0 0 21 22"><defs><clipPath id="cfc"><rect x="0" y="0" width="21" height="21"/></clipPath></defs><g clip-path="url(#cfc)" fill="#3a87ad"><path d="M0 21L0 11.8A9.2 9.2 0 0 1 9.2 21Z"/><path d="M0 8.7A12.3 12.3 0 0 1 12.3 21L16.6 21A16.6 16.6 0 0 0 0 4.4Z"/><rect x="-1.6" y="-20.3" width="3.2" height="5" transform="translate(0 21) rotate(0)"/><rect x="-1.6" y="-20.3" width="3.2" height="5" transform="translate(0 21) rotate(22.5)"/><rect x="-1.6" y="-20.3" width="3.2" height="5" transform="translate(0 21) rotate(45)"/><rect x="-1.6" y="-20.3" width="3.2" height="5" transform="translate(0 21) rotate(67.5)"/><rect x="-1.6" y="-20.3" width="3.2" height="5" transform="translate(0 21) rotate(90)"/></g></svg>
<svg style="position:absolute;left:335px;top:101px" width="12" height="13" viewBox="0 0 12 13"><path d="M0 0H10L12 2V13H0Z" fill="#3a87ad"/><rect x="2.5" y="0" width="6" height="4.2" fill="#fff"/><rect x="6.3" y="0.7" width="1.4" height="2.6" fill="#3a87ad"/><rect x="2" y="7.5" width="8" height="4" fill="#e6e6e6"/></svg>
<svg style="position:absolute;left:435px;top:102px" width="12" height="12" viewBox="0 0 12 12"><rect x="4.6" y="0" width="2.8" height="12" fill="#3a87ad"/><rect x="0" y="4.6" width="12" height="2.8" fill="#3a87ad"/></svg>
<svg style="position:absolute;left:536px;top:102px" width="11" height="11" viewBox="0 0 11 11"><path d="M1 1L10 10M10 1L1 10" stroke="#d9262b" stroke-width="2.6"/></svg>
<svg style="position:absolute;left:636px;top:98px" width="17" height="20" viewBox="0 0 17 20"><defs><linearGradient id="hg" x1="0" y1="0" x2="0" y2="1"><stop offset="0" stop-color="#f7a21c"/><stop offset="0.45" stop-color="#7a8a8a"/><stop offset="1" stop-color="#2f8fd3"/></linearGradient></defs>
<rect x="3" y="0" width="11" height="20" fill="#707070"/><polygon points="4,1.5 13,1.5 8.5,9.5" fill="#f7a21c"/><polygon points="4,18.5 13,18.5 8.5,10.5" fill="#2f8fd3"/>
<path d="M2 4L15 16M15 4L2 16" stroke="#e8232a" stroke-width="3.4" stroke-linecap="round"/></svg>
<svg style="position:absolute;left:336px;top:129px" width="17" height="15" viewBox="0 0 17 15"><path d="M0.3 7.5Q8.5 -3.5 16.7 7.5Q8.5 18.5 0.3 7.5Z" fill="#b4b4b4"/><circle cx="8.5" cy="7.5" r="4.2" fill="#c4c4c4"/><circle cx="8.5" cy="7.5" r="3.2" fill="#b0b0b0"/><circle cx="8.5" cy="7.5" r="1.5" fill="#fff"/></svg>
<svg style="position:absolute;left:336px;top:154px" width="17" height="15" viewBox="0 0 17 15"><path d="M0.3 7.5Q8.5 -3.5 16.7 7.5Q8.5 18.5 0.3 7.5Z" fill="#666"/><circle cx="8.5" cy="7.5" r="4.2" fill="#8a8a8a"/><circle cx="8.5" cy="7.5" r="3" fill="#6a6a6a"/><circle cx="8.5" cy="7.5" r="1.3" fill="#c8c8c8"/></svg>
<svg style="position:absolute;left:637px;top:335px" width="14" height="11" viewBox="0 0 14 11"><path d="M1 5.5L5 9.5L13 1.5" fill="none" stroke="#1b7db5" stroke-width="2.8"/></svg>
<svg style="position:absolute;left:629px;top:423.5px" width="7" height="6" viewBox="0 0 7 6"><polygon points="0,0 6.5,0 3.25,5.5" fill="#444"/></svg>
<svg style="position:absolute;left:453px;top:505px" width="12" height="12" viewBox="0 0 12 12"><rect x="0.5" y="0.5" width="11" height="11" rx="2" fill="#ececec" stroke="#999"/><path d="M2.5 6L5 8.7L9.5 3" fill="none" stroke="#222" stroke-width="2"/></svg>
<svg style="position:absolute;left:629px;top:660.0px" width="7" height="6" viewBox="0 0 7 6"><polygon points="0,0 6.5,0 3.25,5.5" fill="#444"/></svg>
<svg style="position:absolute;left:629px;top:701.0px" width="7" height="6" viewBox="0 0 7 6"><polygon points="0,0 6.5,0 3.25,5.5" fill="#444"/></svg>
<svg style="position:absolute;left:629px;top:785.75px" width="7" height="6" viewBox="0 0 7 6"><polygon points="0,0 6.5,0 3.25,5.5" fill="#444"/></svg>
<div id="t0" style="position:absolute;left:82px;top:23.67px;line-height:0;font-size:20px;color:#1b7bb2;font-weight:normal;white-space:pre;transform:scaleX(0.9515);transform-origin:0 0;">Aerodynamics analysis of a Formul...</div>
<div id="t1" style="position:absolute;left:470px;top:22.78px;line-height:0;font-size:14.5px;color:#444;font-weight:normal;white-space:pre;transform:scaleX(0.8936);transform-origin:0 0;">Mesh Creator</div>
<div id="t2" style="position:absolute;left:597px;top:22.78px;line-height:0;font-size:14.5px;color:#444;font-weight:normal;white-space:pre;transform:scaleX(0.8785);transform-origin:0 0;">Simulation Designer</div>
<div id="t3" style="position:absolute;left:756px;top:22.78px;line-height:0;font-size:14.5px;color:#444;font-weight:normal;white-space:pre;transform:scaleX(0.8777);transform-origin:0 0;">Post-Processor</div>
<div id="t4" style="position:absolute;left:841.5px;top:10.88px;line-height:0;font-size:9px;color:#1a961a;font-weight:normal;white-space:pre;transform:scaleX(0.9412);transform-origin:0 0;">BETA</div>
<div id="t5" style="position:absolute;left:1465.4px;top:24.38px;line-height:0;font-size:14.5px;color:#444;font-weight:normal;white-space:pre;transform:scaleX(0.8768);transform-origin:0 0;">Dashboard</div>
<div id="t6" style="position:absolute;left:1548px;top:24.38px;line-height:0;font-size:14.5px;color:#444;font-weight:normal;white-space:pre;transform:scaleX(0.8759);transform-origin:0 0;">Public Projects</div>
<div id="t7" style="position:absolute;left:1653px;top:24.38px;line-height:0;font-size:14.5px;color:#444;font-weight:normal;white-space:pre;transform:scaleX(0.8591);transform-origin:0 0;">Forum</div>
<div id="t8" style="position:absolute;left:1710.4px;top:24.38px;line-height:0;font-size:14.5px;color:#444;font-weight:normal;white-space:pre;transform:scaleX(0.8851);transform-origin:0 0;">Help</div>
<div id="t9" style="position:absolute;left:1823.8px;top:24.38px;line-height:0;font-size:14.5px;color:#444;font-weight:normal;white-space:pre;transform:scaleX(0.8786);transform-origin:0 0;">AsadAli</div>
<div id="t10" style="position:absolute;left:25px;top:71.47px;line-height:0;font-size:12.5px;color:#1a7db6;font-weight:normal;white-space:pre;transform:scaleX(0.9533);transform-origin:0 0;">Download</div>
<div id="t11" style="position:absolute;left:115px;top:71.47px;line-height:0;font-size:12.5px;color:#1a7db6;font-weight:normal;white-space:pre;transform:scaleX(0.9407);transform-origin:0 0;">Get ParaView®</div>
<div id="t12" style="position:absolute;left:19.5px;top:111.50px;line-height:0;font-size:13px;color:#222;font-weight:normal;white-space:pre;">Meshes</div>
<div id="t13" style="position:absolute;left:35px;top:133.20px;line-height:0;font-size:13px;color:#222;font-weight:normal;white-space:pre;">F1-model-Mesh_1</div>
<div id="t14" style="position:absolute;left:19.5px;top:153.50px;line-height:0;font-size:13px;color:#222;font-weight:normal;white-space:pre;">Simulations</div>
<div id="t15" style="position:absolute;left:35.6px;top:172.30px;line-height:0;font-size:13px;color:#222;font-weight:normal;white-space:pre;">Steady-Incomp-K_w_SST_60m-s</div>
<div id="t16" style="position:absolute;left:51.6px;top:189.50px;line-height:0;font-size:13px;color:#222;font-weight:normal;white-space:pre;">Run1</div>
<div id="t17" style="position:absolute;left:63px;top:211.10px;line-height:0;font-size:13px;color:#1a7db6;font-weight:bold;white-space:pre;text-decoration:underline;white-space:pre"> Solution fields</div>
<div id="t18" style="position:absolute;left:67px;top:235.20px;line-height:0;font-size:13px;color:#222;font-weight:normal;white-space:pre;">Convergence plot</div>
<div id="t19" style="position:absolute;left:67px;top:259.30px;line-height:0;font-size:13px;color:#222;font-weight:normal;white-space:pre;">Force coefficients plot</div>
<div id="t20" style="position:absolute;left:19.5px;top:279.50px;line-height:0;font-size:13px;color:#222;font-weight:normal;white-space:pre;">Result Evaluation</div>
<div id="t21" style="position:absolute;left:35px;top:300.50px;line-height:0;font-size:13px;color:#222;font-weight:normal;white-space:pre;">Screenshots</div>
<div id="t22" style="position:absolute;left:35px;top:324.90px;line-height:0;font-size:13px;color:#222;font-weight:normal;white-space:pre;">Saved States</div>
<div id="t23" style="position:absolute;left:18.7px;top:348.50px;line-height:0;font-size:13px;color:#222;font-weight:normal;white-space:pre;">Reports</div>
<div id="t24" style="position:absolute;left:16.6px;top:811.12px;line-height:0;font-size:13.5px;color:#1d84c0;font-weight:normal;white-space:pre;transform:scaleX(0.9138);transform-origin:0 0;">Job Status</div>
<div id="t25" style="position:absolute;left:17.3px;top:843.20px;line-height:0;font-size:13px;color:#444;font-weight:bold;white-space:pre;transform:scaleX(0.9881);transform-origin:0 0;">Name</div>
<div id="t26" style="position:absolute;left:141px;top:843.20px;line-height:0;font-size:13px;color:#444;font-weight:bold;white-space:pre;transform:scaleX(0.9941);transform-origin:0 0;">Status</div>
<div id="t27" style="position:absolute;left:102.5px;top:864.72px;line-height:0;font-size:13.5px;color:#333;font-weight:normal;white-space:pre;transform:scaleX(0.9469);transform-origin:0 0;">no entities available</div>
<div id="t28" style="position:absolute;left:333px;top:71.34px;line-height:0;font-size:12px;color:#333;font-weight:normal;white-space:pre;">p [point-data]</div>
<div id="t29" style="position:absolute;left:543px;top:70.84px;line-height:0;font-size:12px;color:#444;font-weight:normal;white-space:pre;">Surface</div>
<div id="t30" style="position:absolute;left:719px;top:70.34px;line-height:0;font-size:12px;color:#111;font-weight:normal;white-space:pre;">4000</div>
<div id="t31" style="position:absolute;left:828px;top:70.04px;line-height:0;font-size:12px;color:#2a84b8;font-weight:normal;white-space:pre;">Rescale</div>
<div id="t32" style="position:absolute;left:940px;top:70.04px;line-height:0;font-size:12px;color:#2a84b8;font-weight:normal;white-space:pre;">Viewport Tools</div>
<div id="t33" style="position:absolute;left:1072px;top:70.04px;line-height:0;font-size:12px;color:#2a84b8;font-weight:normal;white-space:pre;">Configuration</div>
<div id="t34" style="position:absolute;left:355.5px;top:107.84px;line-height:0;font-size:12px;color:#2a84b8;font-weight:normal;white-space:pre;">Save State</div>
<div id="t35" style="position:absolute;left:455.7px;top:107.84px;line-height:0;font-size:12px;color:#2a84b8;font-weight:normal;white-space:pre;">Add Filter</div>
<div id="t36" style="position:absolute;left:555.3px;top:107.84px;line-height:0;font-size:12px;color:#2a84b8;font-weight:normal;white-space:pre;">Delete Filter</div>
<div id="t37" style="position:absolute;left:359.6px;top:136.80px;line-height:0;font-size:13px;color:#111;font-weight:normal;white-space:pre;">Run1</div>
<div id="t38" style="position:absolute;left:359.6px;top:162.00px;line-height:0;font-size:13px;color:#2a7db0;font-weight:bold;white-space:pre;">Reflect1</div>
<div id="t39" style="position:absolute;left:334.2px;top:341.24px;line-height:0;font-size:12px;color:#111;font-weight:normal;white-space:pre;">Property panel</div>
<div id="t40" style="position:absolute;left:346.3px;top:383.84px;line-height:0;font-size:12px;color:#333;font-weight:bold;white-space:pre;">Source</div>
<div id="t41" style="position:absolute;left:344.2px;top:425.84px;line-height:0;font-size:12px;color:#111;font-weight:normal;white-space:pre;">Plane</div>
<div id="t42" style="position:absolute;left:470.6px;top:426.84px;line-height:0;font-size:12px;color:#555;font-weight:normal;white-space:pre;">X Min</div>
<div id="t43" style="position:absolute;left:344.2px;top:467.14px;line-height:0;font-size:12px;color:#111;font-weight:normal;white-space:pre;">Center</div>
<div id="t44" style="position:absolute;left:466.6px;top:470.84px;line-height:0;font-size:12px;color:#555;font-weight:normal;white-space:pre;">0</div>
<div id="t45" style="position:absolute;left:344.2px;top:510.64px;line-height:0;font-size:12px;color:#111;font-weight:normal;white-space:pre;">Copy Input</div>
<div id="t46" style="position:absolute;left:346.3px;top:574.84px;line-height:0;font-size:12px;color:#333;font-weight:bold;white-space:pre;">Representation</div>
<div id="t47" style="position:absolute;left:344.2px;top:617.44px;line-height:0;font-size:12px;color:#111;font-weight:normal;white-space:pre;">Opacity</div>
<div id="t48" style="position:absolute;left:466.6px;top:621.39px;line-height:0;font-size:12px;color:#555;font-weight:normal;white-space:pre;">1</div>
<div id="t49" style="position:absolute;left:344.2px;top:660.84px;line-height:0;font-size:12px;color:#111;font-weight:normal;white-space:pre;">Render Mode</div>
<div id="t50" style="position:absolute;left:470.6px;top:661.64px;line-height:0;font-size:12px;color:#555;font-weight:normal;white-space:pre;">Sphere (Texture)</div>
<div id="t51" style="position:absolute;left:344.2px;top:701.84px;line-height:0;font-size:12px;color:#111;font-weight:normal;white-space:pre;">Radius Mode</div>
<div id="t52" style="position:absolute;left:470.6px;top:702.64px;line-height:0;font-size:12px;color:#555;font-weight:normal;white-space:pre;">Constant</div>
<div id="t53" style="position:absolute;left:344.2px;top:742.54px;line-height:0;font-size:12px;color:#111;font-weight:normal;white-space:pre;">Max Pixel Size</div>
<div id="t54" style="position:absolute;left:466.6px;top:747.39px;line-height:0;font-size:12px;color:#555;font-weight:normal;white-space:pre;">64</div>
<div id="t55" style="position:absolute;left:344.2px;top:786.84px;line-height:0;font-size:12px;color:#111;font-weight:normal;white-space:pre;">Opacity Array</div>
<div id="t56" style="position:absolute;left:470.6px;top:787.39px;line-height:0;font-size:12px;color:#555;font-weight:normal;white-space:pre;">p [m2/s2]</div>
<div id="t57" style="position:absolute;left:1649.5px;top:564.04px;line-height:0;font-size:19.5px;color:#111;font-weight:normal;white-space:pre;transform:scaleX(1.1272);transform-origin:0 0;-webkit-text-stroke:0.45px rgba(224,224,224,0.85);">U (m/s) Magnitude</div>
<div id="t58" style="position:absolute;left:1761px;top:589.57px;line-height:0;font-size:20px;color:#111;font-weight:normal;white-space:pre;transform:scaleX(1.0146);transform-origin:0 0;-webkit-text-stroke:0.45px rgba(224,224,224,0.85);">9.310e+01</div>
<div id="t59" style="position:absolute;left:1761px;top:675.07px;line-height:0;font-size:20px;color:#111;font-weight:normal;white-space:pre;transform:scaleX(0.9890);transform-origin:0 0;-webkit-text-stroke:0.45px rgba(224,224,224,0.85);">69.825</div>
<div id="t60" style="position:absolute;left:1761px;top:760.57px;line-height:0;font-size:20px;color:#111;font-weight:normal;white-space:pre;-webkit-text-stroke:0.45px rgba(224,224,224,0.85);">46.55</div>
<div id="t61" style="position:absolute;left:1761px;top:845.57px;line-height:0;font-size:20px;color:#111;font-weight:normal;white-space:pre;transform:scaleX(0.9890);transform-origin:0 0;-webkit-text-stroke:0.45px rgba(224,224,224,0.85);">23.275</div>
<div id="t62" style="position:absolute;left:1761px;top:931.07px;line-height:0;font-size:20px;color:#111;font-weight:normal;white-space:pre;transform:scaleX(1.0146);transform-origin:0 0;-webkit-text-stroke:0.45px rgba(224,224,224,0.85);">0.000e+00</div>
<div id="t63" style="position:absolute;left:795px;top:822.77px;line-height:0;font-size:20px;color:#fff;font-weight:normal;white-space:pre;transform:scaleX(0.8993);transform-origin:0 0;">Y</div>
<div id="t64" style="position:absolute;left:757px;top:884.67px;line-height:0;font-size:20px;color:#fff;font-weight:normal;white-space:pre;transform:scaleX(0.9003);transform-origin:0 0;">Z</div>
<div id="t65" style="position:absolute;left:822px;top:889.07px;line-height:0;font-size:20px;color:#fff;font-weight:normal;white-space:pre;transform:scaleX(0.8618);transform-origin:0 0;">X</div>
<div id="t66" style="position:absolute;left:1797px;top:973.67px;line-height:0;font-size:12.5px;color:#fff;font-weight:normal;white-space:pre;transform:scaleX(0.9536);transform-origin:0 0;">Report an issue</div>
</body></html>
